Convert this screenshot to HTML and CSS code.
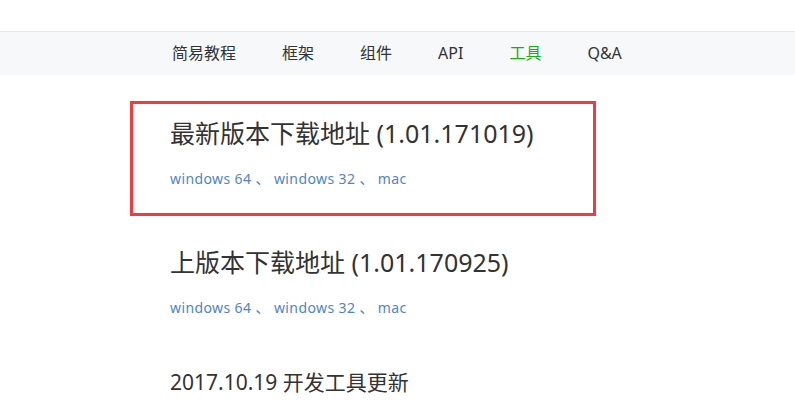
FILE: index.html
```html
<!DOCTYPE html>
<html lang="zh-CN">
<head>
<meta charset="utf-8">
<title>工具</title>
<link rel="stylesheet" href="styles.css">
</head>
<body>
<div class="topbar"></div>
<nav class="nav">
  <a class="nav-item" href="#">简易教程</a>
  <a class="nav-item" href="#">框架</a>
  <a class="nav-item" href="#">组件</a>
  <a class="nav-item" href="#">API</a>
  <a class="nav-item active" href="#">工具</a>
  <a class="nav-item" href="#">Q&amp;A</a>
</nav>
<main class="main">
  <section class="section highlight">
    <h2 class="title">最新版本下载地址 (1.01.171019)</h2>
    <p class="links"><a href="#">windows 64</a> 、 <a href="#">windows 32</a> 、 <a href="#">mac</a></p>
  </section>
  <section class="section second">
    <h2 class="title">上版本下载地址 (1.01.170925)</h2>
    <p class="links"><a href="#">windows 64</a> 、 <a href="#">windows 32</a> 、 <a href="#">mac</a></p>
  </section>
  <h3 class="update">2017.10.19 开发工具更新</h3>
</main>
</body>
</html>
```

FILE: styles.css
```css
html, body {
  margin: 0;
  padding: 0;
  background: #ffffff;
}
body {
  font-family: "Noto Sans", "Noto Sans CJK SC", sans-serif;
  color: #333333;
}
.topbar {
  height: 31px;
}
.nav {
  display: flex;
  border-top: 1px solid #e7e8ea;
  background: #f7f8fa;
  height: 43px;
  padding-left: 149px;
}
.nav-item {
  padding: 0 23px;
  line-height: 43px;
  font-size: 16px;
  color: #333333;
  text-decoration: none;
}
.nav-item.active {
  color: #1aad19;
}
.main {
  padding-left: 170px;
}
.section {
  position: relative;
}
.highlight {
  margin-top: 40px;
}
.highlight::before {
  content: "";
  position: absolute;
  left: -40px;
  top: -14px;
  width: 460px;
  height: 109px;
  border: 3px solid #f03c3c;
}
.second {
  margin-top: 55px;
}
.title {
  margin: 0;
  font-size: 25px;
  line-height: 36px;
  font-weight: normal;
  color: #333333;
}
.links {
  margin: 18px 0 0;
  font-size: 14px;
  line-height: 20px;
  letter-spacing: 0.4px;
  color: #4e85c8;
}
.links a {
  color: #4e85c8;
  text-decoration: none;
}
.update {
  margin: 49px 0 0;
  font-size: 21px;
  line-height: 30px;
  font-weight: normal;
  color: #333333;
}
```
